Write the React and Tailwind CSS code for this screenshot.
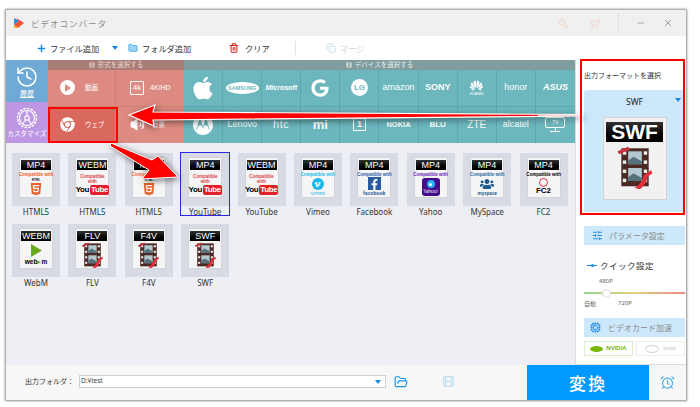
import { Plus, Folder, FolderOpen, Trash2, History, KeyRound, ShoppingCart, Minus, X, Copy, Volume2, AlarmClock, SlidersHorizontal, Cpu, Film } from "lucide-react";
import { FaApple, FaGoogle, FaChrome, FaHtml5, FaVimeoV, FaFacebookF, FaUsers } from "react-icons/fa";
import { SiHuawei, SiMotorola } from "react-icons/si";

const jp = "font-['Noto_Sans_CJK_JP','Noto_Sans',sans-serif]";

function FilmStrip({ w }) {
  return (
    <svg width={w} height={w * 1.12} viewBox="0 0 50 56" className="block">
      <rect x="7" y="3" width="36" height="50" fill="#4a2a22" />
      {[7, 19, 31, 43].map((y) => (
        <g key={y}>
          <rect x="9" y={y} width="4.5" height="4.5" fill="#eee" />
          <rect x="36.5" y={y} width="4.5" height="4.5" fill="#eee" />
        </g>
      ))}
      <rect x="16" y="7" width="18" height="17" fill="#b4c8d2" />
      <path d="M16 19l7-5 11 6v4H16z" fill="#56707c" />
      <rect x="16" y="29" width="18" height="17" fill="#b4c8d2" />
      <path d="M16 41l7-5 11 6v4H16z" fill="#56707c" />
      <path d="M2 7l14-6 2 4-14 6z" fill="#c9343c" />
      <path d="M24 55c6-2 10-8 13-17l9-6 2 4-6 4c-2 8-5 13-11 17z" fill="#e0313c" />
    </svg>
  );
}

function YouTubeMark() {
  return (
    <div className="flex items-center justify-center font-['Liberation_Sans',sans-serif] text-[8px] leading-none font-bold tracking-tighter text-black">
      You
      <span className="ml-[1px] rounded-[2px] bg-[#e0202c] px-[1px] py-[1px] text-white">Tube</span>
    </div>
  );
}

function Doc({ title, children, big }) {
  return (
    <div className={big ? "flex h-[83px] w-[64px] flex-col items-center border border-[#d4d4d4] bg-[#f1f1f1] pt-[4px]" : "flex h-[39px] w-[32px] flex-col items-center bg-[#f5f5f5] pt-[2px] shadow-[0_0_1px_#aaa]"}>
      <div className={big ? "flex h-[20px] w-[57px] items-center justify-center bg-gradient-to-b from-[#333] to-black font-['Liberation_Sans',sans-serif] text-[21px] font-bold text-white" : "flex h-[10px] w-[30px] items-center justify-center bg-gradient-to-b from-[#333] to-black font-['Liberation_Sans',sans-serif] text-[9px] leading-none text-white"}>
        {title}
      </div>
      {children}
    </div>
  );
}

function Compat({ color, two }) {
  return (
    <div className={`mt-[2px] text-center font-['Liberation_Sans',sans-serif] text-[4.5px] leading-[5px] font-bold whitespace-nowrap ${color}`}>
      {two ? <>Compatible<br />with</> : "Compatible with"}
    </div>
  );
}

function Html5Doc() {
  return (
    <Doc title="MP4">
      <Compat color="text-[#f0602a]" />
      <div className="mt-[1px] text-[3px] leading-[4px] font-bold text-black">HTML</div>
      <FaHtml5 className="text-[14px] text-[#e8632a]" />
    </Doc>
  );
}

function YouTubeDoc({ title }) {
  return (
    <Doc title={title}>
      <div className="h-[2px]" />
      <Compat color="text-[#e0404c]" two />
      <div className="h-[1px]" />
      <YouTubeMark />
    </Doc>
  );
}

function FilmDoc({ title }) {
  return (
    <Doc title={title}>
      <div className="mt-[1px]">
        <FilmStrip w={23} />
      </div>
    </Doc>
  );
}

const cards = [
  { label: "HTML5", doc: <Html5Doc /> },
  { label: "HTML5", doc: <YouTubeDoc title="WEBM" /> },
  { label: "HTML5", doc: <Html5Doc /> },
  { label: "YouTube", doc: <YouTubeDoc title="MP4" />, selected: true },
  { label: "YouTube", doc: <YouTubeDoc title="WEBM" /> },
  {
    label: "Vimeo",
    doc: (
      <Doc title="MP4">
        <Compat color="text-[#20bfe8]" />
        <div className="mt-[1px] flex h-[12px] w-[12px] items-center justify-center rounded-full bg-[#1ab7ea] text-[7px] text-white"><FaVimeoV /></div>
        <div className="text-[5px] leading-[6px] text-[#1ab7ea]">vimeo</div>
      </Doc>
    ),
  },
  {
    label: "Facebook",
    doc: (
      <Doc title="MP4">
        <Compat color="text-[#2d5ca8]" />
        <div className="flex h-[13px] w-[13px] items-end justify-center bg-[#2a5a9e] text-[11px] text-white"><FaFacebookF /></div>
        <div className="text-[5px] leading-[6px] font-bold text-[#2a5a9e]">facebook</div>
      </Doc>
    ),
  },
  {
    label: "Yahoo",
    doc: (
      <Doc title="MP4">
        <Compat color="text-[#6a20c0]" />
        <div className="mt-[1px] flex h-[18px] w-[18px] flex-col items-center rounded-[3px] bg-[#420b8c] pt-[2px]">
          <div className="flex h-[8px] w-[8px] items-center justify-center rounded-full bg-[#2ab0f0]"><div className="h-[3px] w-[3px] rounded-full bg-white" /></div>
          <div className="text-[4.5px] leading-[6px] text-white">Yahoo!</div>
        </div>
      </Doc>
    ),
  },
  {
    label: "MySpace",
    doc: (
      <Doc title="MP4">
        <Compat color="text-[#2a6a9e]" />
        <FaUsers className="text-[14px] text-[#1d5a8c]" />
        <div className="text-[4.5px] leading-[4px] font-bold text-[#1d5a8c]">myspace</div>
      </Doc>
    ),
  },
  {
    label: "FC2",
    doc: (
      <Doc title="MP4">
        <Compat color="text-black" />
        <div className="mt-[1px] h-[9px] w-[9px] rounded-full border border-[#e03040]" />
        <div className="font-['Liberation_Sans',sans-serif] text-[8px] leading-[8px] font-bold text-black">FC2</div>
      </Doc>
    ),
  },
  {
    label: "WebM",
    doc: (
      <Doc title="WEBM">
        <svg width="16" height="15" viewBox="0 0 16 15" className="mt-[2px]"><path d="M3 1l11 6.5L3 14z" fill="#6aaa1e" /></svg>
        <div className="font-['Liberation_Sans',sans-serif] text-[6.5px] leading-[7px] font-bold text-black">web<span className="text-[#6aaa1e]">▸</span>m</div>
      </Doc>
    ),
  },
  { label: "FLV", doc: <FilmDoc title="FLV" /> },
  { label: "F4V", doc: <FilmDoc title="F4V" /> },
  { label: "SWF", doc: <FilmDoc title="SWF" /> },
];

const brand = "font-['Liberation_Sans',sans-serif] text-white font-bold leading-none";

const devices = [
  <FaApple className="text-[26px] text-white" />,
  <div className="flex h-[12px] w-[33px] items-center justify-center rounded-[50%] bg-white font-['Liberation_Sans',sans-serif] text-[5.5px] font-bold text-[#6cb6bd]">SAMSUNG</div>,
  <span className={`${brand} text-[7px] italic`}>Microsoft</span>,
  <FaGoogle className="text-[18px] text-white" />,
  <div className="flex h-[17px] w-[17px] items-center justify-center rounded-full bg-white font-['Liberation_Sans',sans-serif] text-[8px] font-bold text-[#6cb6bd]">LG</div>,
  <span className="font-['Liberation_Sans',sans-serif] text-[9px] leading-none text-white">amazon</span>,
  <span className="font-['Liberation_Sans',sans-serif] text-[9px] leading-none font-bold text-white">SONY</span>,
  <div className="flex flex-col items-center text-white"><SiHuawei className="text-[13px]" /><span className="font-['Liberation_Sans',sans-serif] text-[3.5px] leading-[4px]">HUAWEI</span></div>,
  <span className="font-['Liberation_Sans',sans-serif] text-[9px] leading-none text-white">honor</span>,
  <span className={`${brand} text-[9px] italic`}>ASUS</span>,
  <SiMotorola className="text-[20px] text-white" />,
  <span className="font-['Liberation_Sans',sans-serif] text-[9px] leading-none text-white">Lenovo</span>,
  <span className="font-['Liberation_Sans',sans-serif] text-[11px] leading-none tracking-wider text-white">htc</span>,
  <span className={`${brand} text-[13px]`}>mi</span>,
  <div className="flex h-[13px] w-[13px] items-center justify-center border border-white font-['Liberation_Sans',sans-serif] text-[9px] font-bold text-white">1</div>,
  <span className={`${brand} text-[7.5px]`}>NOKIA</span>,
  <span className={`${brand} text-[8px]`}>BLU</span>,
  <span className="font-['Liberation_Sans',sans-serif] text-[10px] leading-none text-white">ZTE</span>,
  <span className="font-['Liberation_Sans',sans-serif] text-[9px] leading-none text-white">alcatel</span>,
  <div className="flex flex-col items-center text-white"><div className="flex h-[11px] w-[20px] items-center justify-center rounded-[2px] border border-white font-['Liberation_Sans',sans-serif] text-[5px]">TV</div><div className="h-[3px] w-[1px] bg-white" /><div className="h-[1px] w-[10px] bg-white" /></div>,
];

function Annotations() {
  return (
    <>
      <svg width="700" height="407" className="pointer-events-none absolute top-0 left-0 drop-shadow-[2px_2px_3px_rgba(0,0,0,0.5)]">
        <path d="M129 115L155 105L153 112L582 114.5V116L153 120L154 126Z" fill="#ff0000" stroke="#fff" strokeWidth="1.2" />
        <path d="M538 114.8H582V115.8H538Z" fill="#fff" />
        <path d="M111 143L152 160L158 156L178 177L142 179L149 170L110 146Z" fill="#ff0000" stroke="#fff" strokeWidth="1" />
      </svg>
      <div className="pointer-events-none absolute top-[107px] left-[48px] h-[36px] w-[70px] border-2 border-[#ff0000]" />
      <div className="pointer-events-none absolute top-[59px] left-[580px] h-[156px] w-[105px] border-2 border-[#ff0000]" />
    </>
  );
}

export default function App() {
  return (
    <div className={`relative h-[407px] w-[700px] overflow-hidden bg-white pt-[10px] pl-[6px] ${jp}`}>
      <div className="flex h-[390px] w-[680px] flex-col bg-white shadow-[0_0_2px_1px_#8a8a8a]">
        {/* Title bar */}
        <div className="flex h-[26px] shrink-0 items-center bg-[#f0f0f0] pl-[7px]">
          <svg width="12" height="12" viewBox="0 0 12 12">
            <path d="M1 1l5 3-5 4z" fill="#2a8fdc" />
            <path d="M1 8l5-4 5 2-6 5z" fill="#f0592a" />
            <path d="M3 1l8 5-5-1z" fill="#e83a5a" />
            <path d="M1 8l4 3-4 0z" fill="#f6b21a" />
          </svg>
          <span className="ml-[6px] text-[8.5px] tracking-[1px] text-[#8a8a8a]">ビデオコンバータ</span>
          <div className="ml-auto flex items-center text-[#f3cfc9]">
            <KeyRound size={11} className="mr-[21px] -scale-x-100" />
            <ShoppingCart size={11} className="mr-[17px] -scale-x-100" />
            <div className="h-[20px] w-[1px] bg-[#dedede]" />
            <Minus size={10} className="mr-[17px] ml-[17px] text-[#999]" />
            <X size={10} className="mr-[13px] text-[#888]" />
          </div>
        </div>

        {/* Toolbar */}
        <div className="flex h-[24px] shrink-0 items-center text-[8.2px] whitespace-nowrap text-[#333]">
          <Plus size={11} strokeWidth={3} className="ml-[30px] text-[#1b87e6]" />
          <span className="ml-[3px] w-[49px]">ファイル追加</span>
          <div className="ml-[13px] h-0 w-0 border-x-[3.5px] border-t-[4px] border-x-transparent border-t-[#1b87e6]" />
          <Folder size={10} fill="#9fd3f5" className="ml-[10px] text-[#4aa8e8]" />
          <span className="ml-[4px] w-[49px]">フォルダ追加</span>
          <Trash2 size={10} strokeWidth={2.5} className="ml-[38px] text-[#d5201c]" />
          <span className="ml-[6px] w-[24px]">クリア</span>
          <div className="ml-[26px] h-[14px] w-[1px] bg-[#e2e2e2]" />
          <Copy size={10} className="ml-[30px] text-[#bfdcef]" />
          <span className="ml-[4px] text-[#cfcfcf]">マージ</span>
        </div>

        {/* Body */}
        <div className="flex h-[305px] shrink-0">
          <div className="flex w-[569px] flex-col">
            <div className="flex h-[83px] shrink-0 text-white">
              <div className="flex w-[42px] shrink-0 flex-col">
                <div className="flex h-[42px] flex-col items-center justify-center bg-[#6fa9d5]">
                  <History size={24} strokeWidth={1.5} />
                  <span className="text-[7px] leading-[9px] underline">履歴</span>
                </div>
                <div className="flex h-[41px] flex-col items-center justify-center bg-[#bd96e4]">
                  <svg width="22" height="22" viewBox="0 0 22 22" fill="none" stroke="#fff">
                    <circle cx="11" cy="11" r="9.5" strokeDasharray="2.5 1.2" strokeWidth="1.6" />
                    <circle cx="11" cy="11" r="7.5" strokeWidth="1.2" />
                    <circle cx="11" cy="11" r="2.2" strokeWidth="1.2" />
                    <path d="M6.5 17l3-4M15.5 17l-3-4M11 3.5v5" strokeWidth="1.2" />
                  </svg>
                  <span className="text-[6.5px] leading-[9px] whitespace-nowrap">カスタマイズ</span>
                </div>
              </div>

              <div className="flex w-[136px] shrink-0 flex-col bg-[#dd8b82]">
                <div className="flex h-[10px] items-center justify-center bg-[#a97c75] text-[6.5px] text-[#e8dcd8]">
                  <Film size={6} className="mr-[3px]" />形式を選択する
                </div>
                <div className="grid flex-1 grid-cols-2 grid-rows-2 text-[6.5px]">
                  <div className="flex items-center border-r border-b border-[#d27e75] pl-[12px]">
                    <div className="flex h-[15px] w-[15px] items-center justify-center rounded-full bg-white">
                      <div className="ml-[1px] h-0 w-0 border-y-[4px] border-l-[6px] border-y-transparent border-l-[#dd8b82]" />
                    </div>
                    <span className="ml-[10px]">動画</span>
                  </div>
                  <div className="flex items-center border-b border-[#d27e75] pl-[14px]">
                    <div className="flex h-[14px] w-[14px] items-center justify-center rounded-[1px] border border-white font-['Liberation_Sans',sans-serif] text-[8px] leading-none">4k</div>
                    <span className="ml-[6px] font-['Liberation_Sans',sans-serif] text-[7px]">4K/HD</span>
                  </div>
                  <div className="flex items-center border-r border-[#d27e75] bg-[#d9695e] pl-[12px]">
                    <FaChrome className="text-[15px]" />
                    <span className="ml-[10px]">ウェブ</span>
                  </div>
                  <div className="flex items-center pl-[14px]">
                    <Volume2 size={15} fill="#fff" />
                    <span className="ml-[7px]">音楽</span>
                  </div>
                </div>
              </div>

              <div className="flex flex-1 flex-col bg-[#6cb6bd]">
                <div className="flex h-[10px] items-center justify-center bg-[#7f9c9e] text-[6.5px] text-[#e6eeee]">
                  <Film size={6} className="mr-[3px]" />デバイスを選択する
                </div>
                <div className="grid flex-1 grid-cols-10 grid-rows-2">
                  {devices.map((d, i) => (
                    <div key={i} className={`flex items-center justify-center border-[#5da7ae] ${i % 10 !== 9 ? "border-r" : ""} ${i < 10 ? "border-b" : ""}`}>
                      {d}
                    </div>
                  ))}
                </div>
              </div>
            </div>

            {/* Format grid */}
            <div className="grid flex-1 grid-cols-[repeat(10,48px)] content-start gap-x-[8.4px] gap-y-[18px] bg-[#edeff4] pt-[10px] pl-[6px]">
              {cards.map((c, i) => (
                <div key={i} className="relative flex flex-col items-center">
                  <div className="flex h-[53px] w-[48px] justify-center bg-[#d8dbe4] pt-[5px]">{c.doc}</div>
                  <span className="h-0 font-['Noto_Sans',sans-serif] text-[8px] leading-[12px] whitespace-nowrap text-[#333]">{c.label}</span>
                  {c.selected && <div className="absolute -top-[1px] -left-[1px] h-[64px] w-[50px] border border-[#2a2ae6]" />}
                </div>
              ))}
            </div>
          </div>

          {/* Right panel */}
          <div className="flex flex-1 flex-col border-b border-l border-[#dcdcdc] pr-[1px] pl-[8px]">
            <div className="h-[30px] pt-[10px] text-[7px] leading-[10px] whitespace-nowrap text-[#333]">出力フォーマットを選択</div>
            <div className="flex h-[122px] flex-col items-center rounded-t-[3px] bg-[#cce8fa]">
              <div className="relative mt-[2px] w-full text-center font-['Noto_Sans',sans-serif] text-[8.5px] leading-[20px] text-[#222]">
                SWF
                <div className="absolute top-[6px] right-[4px] h-0 w-0 border-x-[3.5px] border-t-[4px] border-x-transparent border-t-[#1b87e6]" />
              </div>
              <div className="mt-[5px]">
                <Doc title="SWF" big>
                  <div className="mt-[4px]"><FilmStrip w={38} /></div>
                </Doc>
              </div>
            </div>
            <div className="mt-[14px] flex h-[19px] items-center bg-[#cce8fa] pl-[8px] text-[8px] whitespace-nowrap text-[#8a8a8a]">
              <SlidersHorizontal size={11} className="text-[#1b87e6]" />
              <span className="ml-[6px]">パラメータ設定</span>
            </div>
            <div className="mt-[15px] flex items-center text-[8.5px] leading-[10px] text-[#333]">
              <div className="ml-[3px] flex h-[1px] w-[10px] items-center justify-center bg-[#1b87e6]"><div className="h-[3px] w-[3px] rounded-full bg-[#1b87e6]" /></div>
              <span className="ml-[3px] tracking-[0.5px]">クイック設定</span>
            </div>
            <div className="mt-[8px] pl-[15px] font-['Noto_Sans',sans-serif] text-[6px] leading-[7px] text-[#666]">480P</div>
            <div className="relative mt-[7px] h-[2px] bg-gradient-to-r from-[#8fd88a] via-[#e4d080] to-[#e58a84]">
              <div className="absolute -top-[3.5px] left-[18px] h-[9px] w-[9px] rounded-full border border-[#ddd] bg-white" />
            </div>
            <div className="mt-[6px] flex font-['Noto_Sans',sans-serif] text-[6px] leading-[7px] text-[#666]">
              <span className={jp}>自動</span>
              <span className="ml-[22px]">720P</span>
            </div>
            <div className="mt-[11px] flex h-[19px] shrink-0 items-center bg-[#cce8fa] pl-[6px] text-[8px] whitespace-nowrap text-[#8a8a8a]">
              <Cpu size={11} className="text-[#1b87e6]" />
              <span className="ml-[7px]">ビデオカード加速</span>
            </div>
            <div className="mt-[4px] flex gap-[3px]">
              <div className="flex h-[15px] w-[49px] items-center justify-center gap-[3px] border border-[#dcecd0] font-['Liberation_Sans',sans-serif] text-[6px] font-bold text-[#76b900]">
                <div className="h-[6px] w-[13px] rounded-[50%] bg-[#76b900]" />NVIDIA
              </div>
              <div className="flex h-[15px] w-[49px] items-center justify-center gap-[4px] border border-[#eeeeee] font-['Liberation_Sans',sans-serif] text-[6px] font-bold text-[#d5d5d5]">
                <div className="h-[8px] w-[14px] rounded-[50%] border border-[#d5d5d5]" />Intel
              </div>
            </div>
          </div>
        </div>

        {/* Bottom bar */}
        <div className="flex flex-1 bg-[#f7f7f7]">
          <div className="flex flex-1 items-center pb-[2px]">
            <span className="ml-[19px] w-[54px] text-[7px] text-[#333]">出力フォルダ：</span>
            <div className="flex h-[13px] w-[307px] items-center justify-between border border-[#cfcfcf] bg-white pr-[4px] pl-[1px] text-[6.5px] leading-none text-[#444]">
              <span className="font-['Noto_Sans',sans-serif]">D:¥test</span>
              <div className="h-0 w-0 border-x-[3px] border-t-[4px] border-x-transparent border-t-[#1b87e6]" />
            </div>
            <FolderOpen size={14} className="ml-[8px] text-[#1b97e6]" />
            <Film size={13} className="ml-[34px] text-[#bfe0f5]" />
          </div>
          <div className="flex w-[122px] items-center justify-center bg-[#0099ff] text-[17px] font-medium tracking-[2px] text-white">変換</div>
          <div className="flex w-[37px] items-center justify-center">
            <AlarmClock size={15} className="text-[#4db0ee]" />
          </div>
        </div>
      </div>
      <Annotations />
    </div>
  );
}
